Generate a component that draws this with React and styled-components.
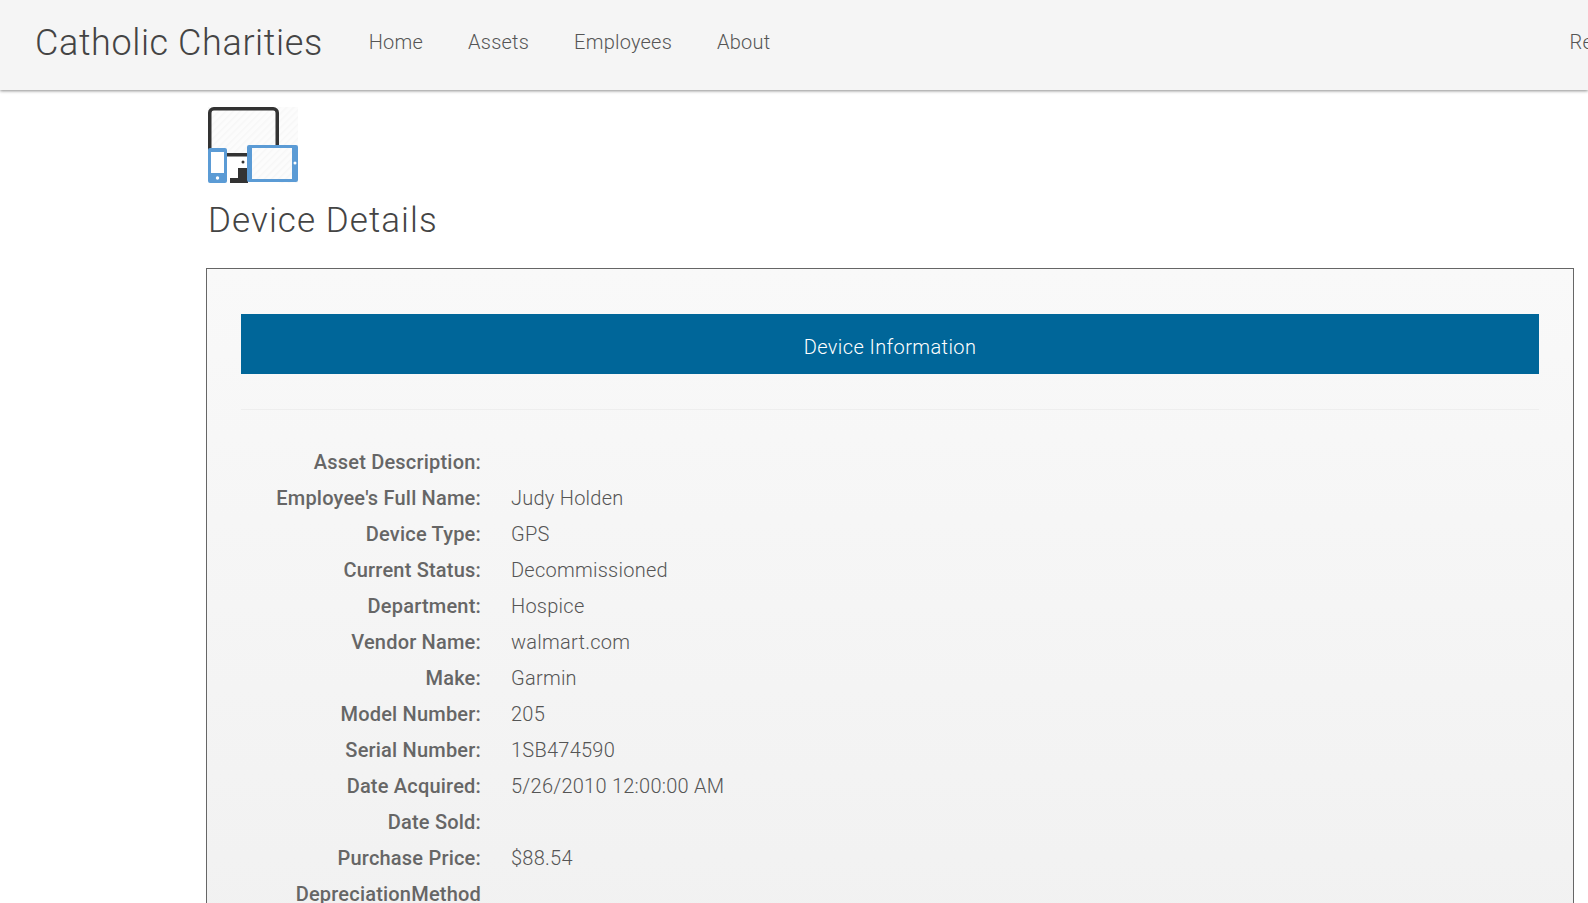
import React from "react";
import styled, { createGlobalStyle } from "styled-components";

const Global = createGlobalStyle`
  html, body { margin: 0; padding: 0; height: 100%; overflow: hidden; background: #fff; }
  body { font-family: Roboto, "Liberation Sans", sans-serif; color: #666; }
`;

const Navbar = styled.nav`
  display: flex;
  align-items: center;
  height: 90px;
  padding-left: 35px;
  background: #f5f5f5;
  box-shadow: 0 1px 3px rgba(0, 0, 0, 0.45);
  overflow: hidden;
`;
const Brand = styled.a`
  font-size: 36px;
  font-weight: 300;
  letter-spacing: 0.6px;
  padding-bottom: 5px;
  color: #444;
  white-space: nowrap;
`;
const NavLinks = styled.div`
  display: flex;
  gap: 45px;
  margin-left: 46px;
  padding-bottom: 7px;
`;
const NavLink = styled.a`
  font-size: 20px;
  font-weight: 300;
  letter-spacing: 0.22px;
  color: #555;
  white-space: nowrap;
`;
const RightLinks = styled.div`
  margin-left: auto;
  width: 18.5px;
  flex-shrink: 0;
  padding-bottom: 7px;
`;
const Main = styled.main`
  padding: 17px 14px 0 206px;
`;
const Heading = styled.h1`
  margin: 14px 0 23px 2px;
  font-size: 35px;
  line-height: 48px;
  font-weight: 300;
  letter-spacing: 1.08px;
  color: #444;
`;
const IconWrap = styled.div`
  display: block;
  margin-left: 2px;
  width: 90px;
  height: 76px;
`;
const Panel = styled.section`
  border: 1px solid #666;
  padding: 45px 34px 0;
  height: 900px;
  background: linear-gradient(#f9f9f9, #f1f1f1 71%);
`;
const Banner = styled.div`
  height: 60px;
  box-sizing: border-box;
  padding-top: 6px;
  background: #006699;
  color: #fff;
  display: flex;
  align-items: center;
  justify-content: center;
  font-size: 20px;
  font-weight: 300;
  letter-spacing: 0.4px;
`;
const Rule = styled.hr`
  border: 0;
  border-top: 1px solid #eee;
  margin: 35px 0 34px;
`;
const Row = styled.div`
  display: grid;
  grid-template-columns: 240px 1fr;
  column-gap: 30px;
  height: 36px;
  line-height: 36px;
  font-size: 20px;
`;
const Label = styled.div`
  text-align: right;
  font-weight: 500;
  letter-spacing: 0.2px;
  color: #666;
  white-space: nowrap;
`;
const Value = styled.div`
  font-weight: 300;
  letter-spacing: 0.25px;
  color: #555;
`;

const rows = [
  ["Asset Description:", ""],
  ["Employee's Full Name:", "Judy Holden"],
  ["Device Type:", "GPS"],
  ["Current Status:", "Decommissioned"],
  ["Department:", "Hospice"],
  ["Vendor Name:", "walmart.com"],
  ["Make:", "Garmin"],
  ["Model Number:", "205"],
  ["Serial Number:", "1SB474590"],
  ["Date Acquired:", "5/26/2010 12:00:00 AM"],
  ["Date Sold:", ""],
  ["Purchase Price:", "$88.54"],
  ["DepreciationMethod", ""],
];

const DevicesIcon = () => (
  <svg width="90" height="76" viewBox="0 0 90 76">
    <defs>
      <pattern id="hatch" width="5" height="5" patternUnits="userSpaceOnUse" patternTransform="rotate(-45)">
        <rect width="5" height="5" fill="#fcfcfc" />
        <rect width="5" height="1.500" fill="#f7f7f7" />
      </pattern>
    </defs>
    <rect x="0" y="0" width="90" height="76" fill="url(#hatch)" />
    <rect x="1.750" y="1.750" width="67.500" height="60" rx="4" fill="url(#hatch)" stroke="#333" strokeWidth="3.500" />
    <rect x="0" y="50" width="71" height="26" fill="#fff" />
    <path d="M69 46H19V49.500H69Z" fill="#333" />
    <circle cx="35" cy="55" r="1.500" fill="#333" />
    <path d="M30 61H40V76H22V71H30Z" fill="#333" />
    <path fillRule="evenodd" fill="#5b9bd5" d="M2 41H17a2 2 0 0 1 2 2V74a2 2 0 0 1-2 2H2a2 2 0 0 1-2-2V43a2 2 0 0 1 2-2ZM3 45V66H16V45Z" />
    <rect x="3" y="45" width="13" height="21" fill="#fff" />
    <circle cx="9.500" cy="71" r="1.700" fill="#fff" />
    <rect x="44" y="41" width="40" height="31" fill="url(#hatch)" />
    <path fillRule="evenodd" fill="#5b9bd5" d="M41 38H88a2 2 0 0 1 2 2V73a2 2 0 0 1-2 2H41a2 2 0 0 1-2-2V40a2 2 0 0 1 2-2ZM44 41V72H84V41Z" />
    <circle cx="87" cy="56" r="1.500" fill="#fff" />
  </svg>
);

export default function App() {
  return (
    <>
      <Global />
      <Navbar>
        <Brand>Catholic Charities</Brand>
        <NavLinks>
          <NavLink>Home</NavLink>
          <NavLink>Assets</NavLink>
          <NavLink>Employees</NavLink>
          <NavLink>About</NavLink>
        </NavLinks>
        <RightLinks>
          <NavLink>Register</NavLink>
        </RightLinks>
      </Navbar>
      <Main>
        <IconWrap>
          <DevicesIcon />
        </IconWrap>
        <Heading>Device Details</Heading>
        <Panel>
          <Banner>Device Information</Banner>
          <Rule />
          {rows.map(([label, value]) => (
            <Row key={label}>
              <Label>{label}</Label>
              <Value>{value}</Value>
            </Row>
          ))}
        </Panel>
      </Main>
    </>
  );
}
